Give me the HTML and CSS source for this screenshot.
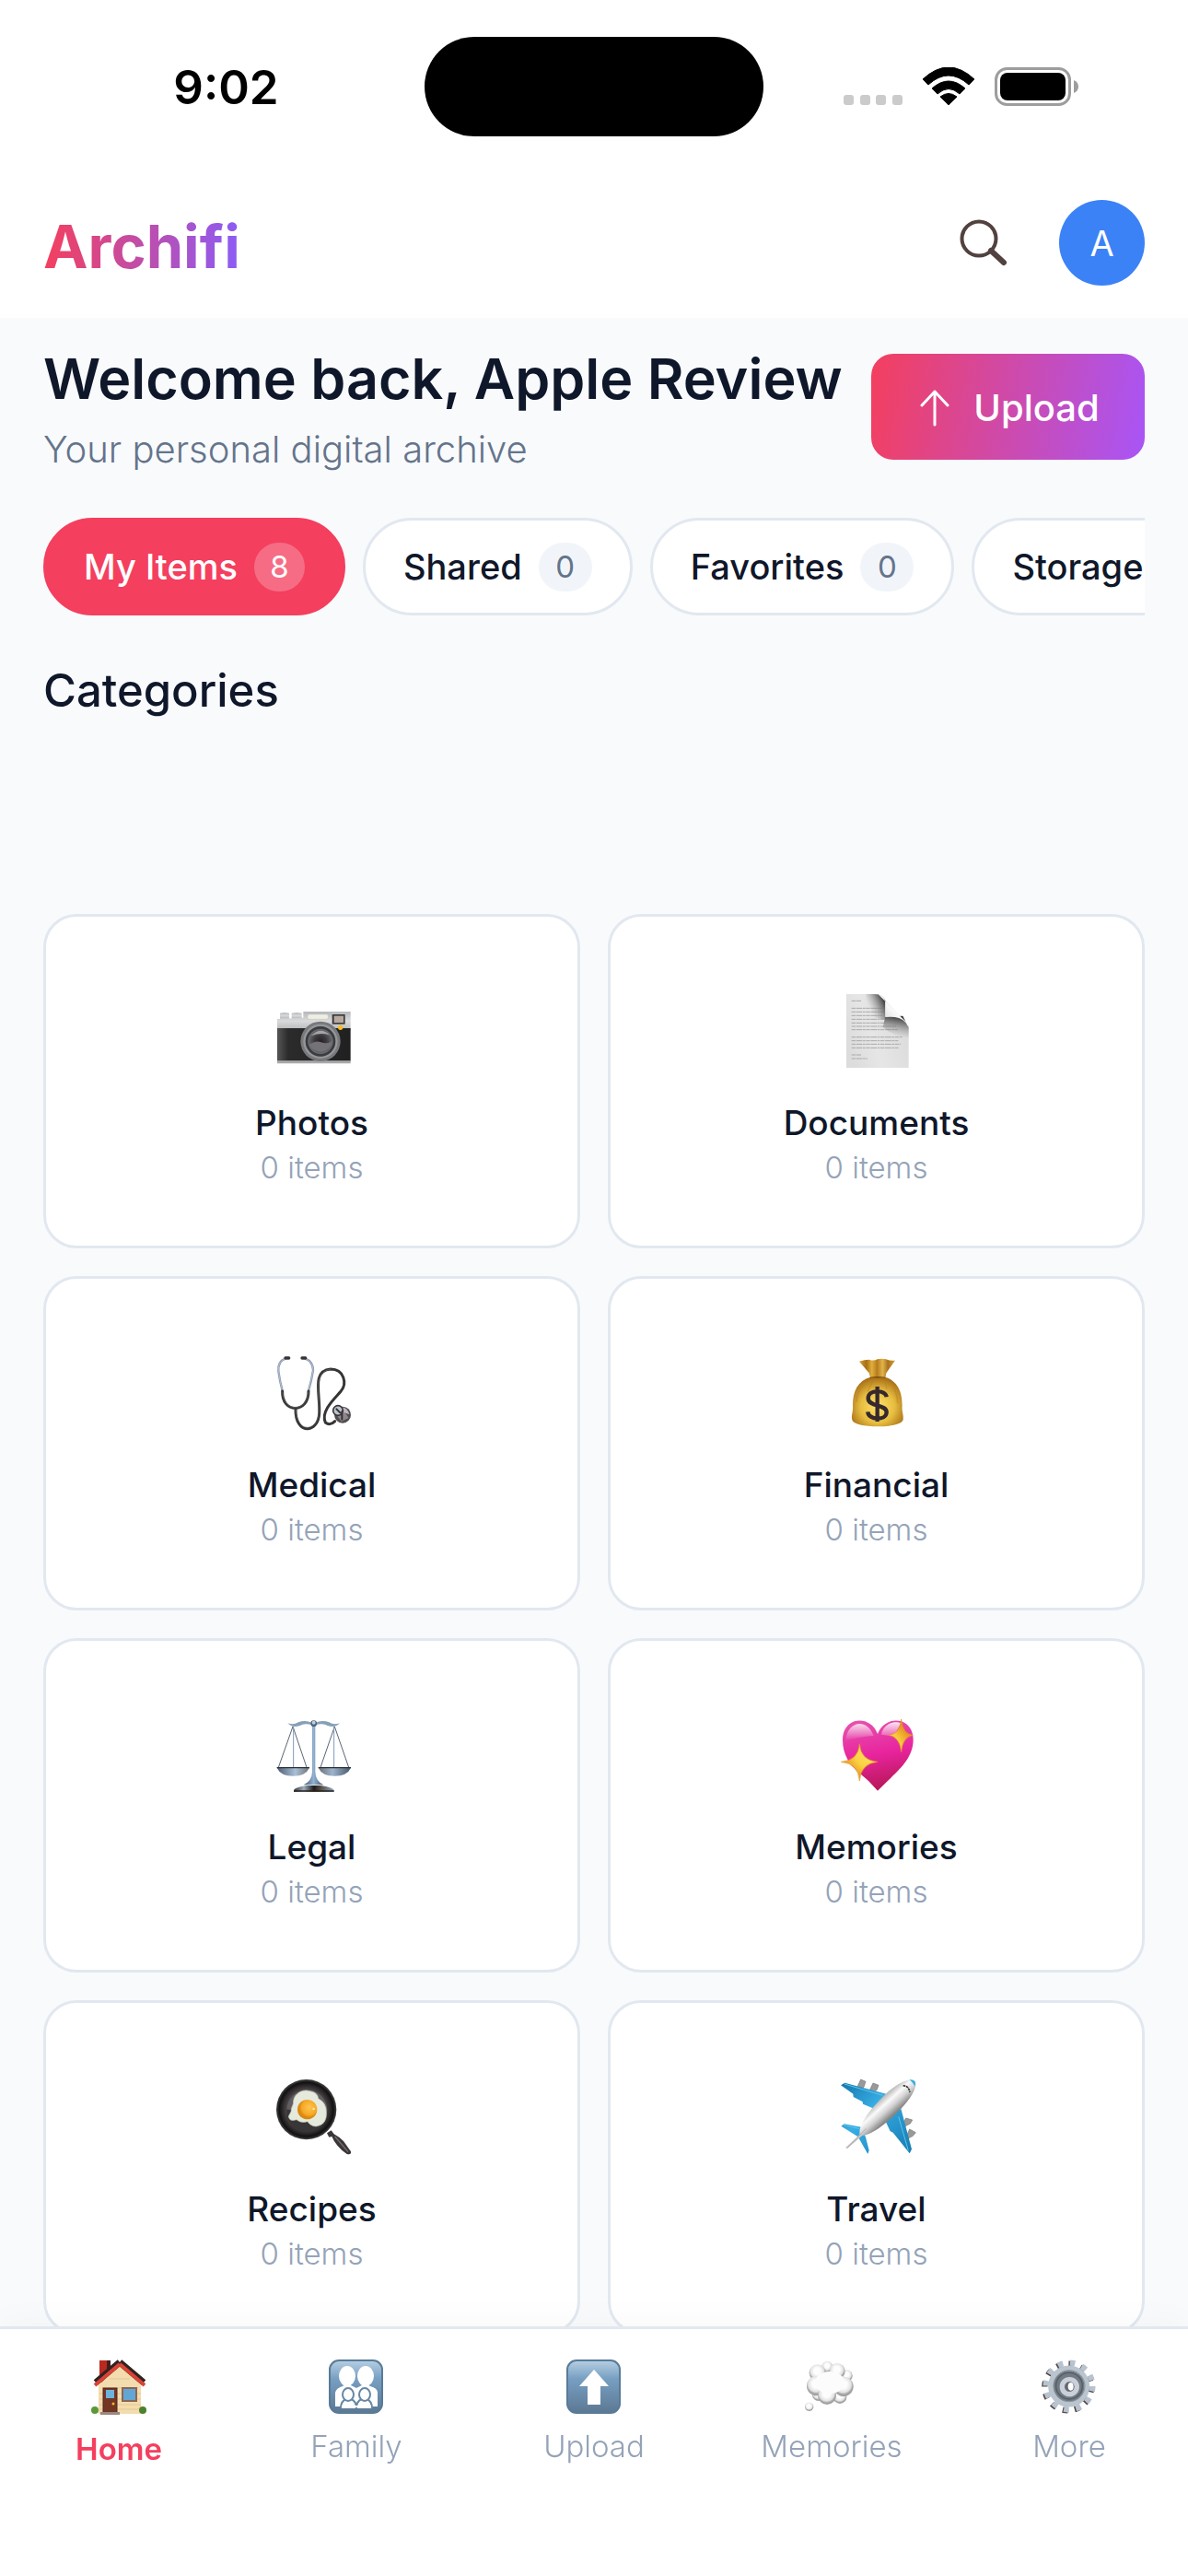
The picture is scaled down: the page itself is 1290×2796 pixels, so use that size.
FILE: index.html
```html
<!DOCTYPE html>
<html lang="en">
<head>
<meta charset="utf-8">
<meta name="viewport" content="width=device-width, initial-scale=1">
<title>Archifi</title>
<link rel="stylesheet" href="styles.css">
</head>
<body>
<div class="app">
  <header class="header">
    <div class="status">
      <span class="status-time">9:02</span>
      <span class="island"></span>
      <span class="status-icons">
        <svg width="64" height="42" viewBox="0 0 64 42" fill="#cbcbcb"><rect y="30" width="11" height="11" rx="3"/><rect x="18" y="30" width="11" height="11" rx="3"/><rect x="35" y="30" width="11" height="11" rx="3"/><rect x="53" y="30" width="11" height="11" rx="3"/></svg>
        <svg width="58" height="42" viewBox="0 0 58 42"><path d="M1 13Q29-13 57 13L51 19Q29-1 7 19ZM11 23Q29 7 47 23L41 29Q29 18 17 29ZM20 32Q29 25 38 32L29 41Z" stroke="#000" stroke-linejoin="round"/></svg>
        <svg width="92" height="42" viewBox="0 0 92 42"><rect x="1.500" y="1.500" width="80" height="39" rx="12" fill="none" stroke="#9d9d9d" stroke-width="3"/><rect x="6" y="6" width="71" height="30" rx="8"/><path d="M86 14q5 2 5 7t-5 7z" fill="#9d9d9d"/></svg>
      </span>
    </div>
    <div class="topbar">
      <span class="logo">Archifi</span>
      <div class="actions">
        <button class="search" aria-label="Search"><svg width="56" height="56" viewBox="0 0 56 56" fill="none" stroke="#51413f" stroke-linecap="round"><circle cx="23" cy="23" r="18.500" stroke-width="4"/><path d="M36 36L50 49" stroke-width="6"/></svg></button>
        <button class="avatar">A</button>
      </div>
    </div>
  </header>

  <main class="main">
    <section class="hero">
      <div>
        <h1 class="welcome">Welcome back, Apple Review</h1>
        <p class="tagline">Your personal digital archive</p>
      </div>
      <button class="upload"><svg width="32" height="40" viewBox="0 0 32 40" fill="none" stroke="#fff" stroke-width="3" stroke-linecap="round" stroke-linejoin="round"><path d="M16 38V2M2 17L16 2L30 17"/></svg>Upload</button>
    </section>

    <div class="tabs">
      <button class="tab active">My Items <span class="count">8</span></button>
      <button class="tab">Shared <span class="count">0</span></button>
      <button class="tab">Favorites <span class="count">0</span></button>
      <button class="tab">Storage <span class="count"></span></button>
    </div>

    <h2 class="section-title">Categories</h2>

    <div class="grid">
      <a class="card" href="#photos">
        <svg class="emoji" viewBox="73 45 264 264">
          <defs>
            <linearGradient id="silver" x2="0" y2="1"><stop stop-color="#b4b7ba"/><stop offset=".5" stop-color="#d8dadb"/><stop offset="1" stop-color="#b5b7b9"/></linearGradient>
            <linearGradient id="leather" x2="1" y2="0"><stop stop-color="#565656"/><stop offset=".15" stop-color="#2b2b2c"/><stop offset="1" stop-color="#202021"/></linearGradient>
            <radialGradient id="lens"><stop stop-color="#262124"/><stop offset=".5" stop-color="#3d3b3e"/><stop offset="1" stop-color="#6e7073"/></radialGradient>
          </defs>
          <path d="M100 119q15-4 30 0v18h-30zM138 119q16-4 33 0v18h-33z" fill="url(#silver)"/>
          <path d="M91 138L176 134V114H330V175H91z" fill="url(#silver)"/>
          <path d="M91 168H330V275H91z" fill="url(#leather)"/>
          <path d="M91 274H330V283H91z" fill="#aaa9aa"/>
          <rect x="190" y="123" width="67" height="16" rx="6" fill="#efeee2" stroke="#bcbcb0"/>
          <rect x="270" y="123" width="42" height="32" fill="#3b3a3c"/><rect x="276" y="128" width="31" height="22" fill="#b8a9a0"/>
          <circle cx="232" cy="211" r="65" fill="#77797b"/><circle cx="232" cy="211" r="56" fill="#95979a"/><circle cx="232" cy="211" r="49" fill="#3a3b3d"/><circle cx="232" cy="211" r="41" fill="url(#lens)"/>
          <path d="M201 193q31-32 61-3-30-10-61 3z" fill="#a6a6aa"/><path d="M195 222q20-16 39-8t38-5q-8 34-40 36-28-3-37-23z" fill="#747276"/>
          <circle cx="297" cy="166" r="8" fill="#f8bd25"/>
        </svg>
        <span class="name">Photos</span><span class="items">0 items</span>
      </a>
      <a class="card" href="#documents">
        <svg class="emoji" viewBox="53 45 264 264">
          <defs>
            <linearGradient id="paper" x1="0" x2="1" y1=".7" y2=".3"><stop stop-color="#dcdcdc"/><stop offset=".4" stop-color="#e6e6e6"/><stop offset="1" stop-color="#dadada"/></linearGradient>
            <linearGradient id="fold-side" gradientUnits="userSpaceOnUse" x1="213" y1="90" x2="165" y2="112"><stop stop-color="#444"/><stop offset="1" stop-color="#999" stop-opacity="0"/></linearGradient>
            <linearGradient id="fold-under" gradientUnits="userSpaceOnUse" x1="250" y1="128" x2="238" y2="195"><stop stop-color="#333"/><stop offset="1" stop-color="#999" stop-opacity="0"/></linearGradient>
            <linearGradient id="curl" x1="0" x2="1" y1="1" y2="0"><stop stop-color="#c8c8c8"/><stop offset=".5" stop-color="#fafafa"/><stop offset="1" stop-color="#ccc"/></linearGradient>
          </defs>
          <path d="M86 57H180Q205 58 213 78L289 160V297H86z" fill="url(#paper)"/>
          <path d="M103 79h31M103 103h100M103 115h104M103 127h100M103 139h105M103 151h110M103 162h145M103 173h150M103 197h165M103 209h152M103 220h160M103 232h153M103 255h31M103 267h52" stroke="#a9a9a9" stroke-width="3" stroke-dasharray="13 2 20 2 8 2"/>
          <path d="M150 57H180Q205 58 213 78V140L150 130z" fill="url(#fold-side)"/>
          <path d="M213 130L270 128 289 165V200Q240 195 205 165z" fill="url(#fold-under)"/>
          <path d="M190 58Q212 64 213 85V132Q274 126 289 165 288 151 274 142z" fill="url(#curl)"/>
        </svg>
        <span class="name">Documents</span><span class="items">0 items</span>
      </a>
      <a class="card" href="#medical">
        <svg class="emoji" viewBox="73 54 264 264" fill="none" stroke-linecap="round">
          <path d="M118 73Q92 84 95 115 99 145 108 179M182 73Q208 84 208 112 203 145 193 179" stroke="#8997ae" stroke-width="7"/>
          <path d="M118 73Q92 84 95 115 99 145 108 179M182 73Q208 84 208 112 203 145 193 179" stroke="#c5d1e2" stroke-width="2"/>
          <path d="M118 72h11M172 72h11" stroke="#373434" stroke-width="10"/>
          <path d="M108 180C105 254 194 254 193 180M151 238C149 324 224 319 228 253 232 190 202 113 265 108 309 108 320 156 298 181 276 206 232 246 248 282Q263 294 279 278" stroke="#353536" stroke-width="9"/>
          <path d="M109 183C108 250 191 250 192 183M152 240C152 315 223 315 226 250 230 190 205 119 265 108" stroke="#777" stroke-width="1.500"/>
          <circle cx="304" cy="257" r="27" fill="#504d50"/><path d="M289 234q31-7 37 22-13-9-24-2z" fill="#bcb5c0"/><path d="M287 261l25-12 12 18-24 12z" fill="#8d8589"/><circle cx="289" cy="243" r="16" fill="#b9c5ca" stroke="#363437" stroke-width="5"/><path d="M284 238l12 12M302 246v26" stroke="#353235" stroke-width="6"/>
        </svg>
        <span class="name">Medical</span><span class="items">0 items</span>
      </a>
      <a class="card" href="#financial">
        <svg class="emoji" viewBox="53 54 264 264">
          <defs>
            <radialGradient id="bag" cx=".5" cy=".6" r=".6"><stop stop-color="#ffe169"/><stop offset=".55" stop-color="#e7bd40"/><stop offset="1" stop-color="#a66d15"/></radialGradient>
            <linearGradient id="neck" x2="1" y2="0"><stop stop-color="#d2a12f"/><stop offset=".2" stop-color="#a96e16"/><stop offset=".35" stop-color="#dfb03b"/><stop offset=".5" stop-color="#b87c1d"/><stop offset=".65" stop-color="#e1b44a"/><stop offset=".8" stop-color="#a9721c"/><stop offset="1" stop-color="#d3a53b"/></linearGradient>
          </defs>
          <path d="M165 134C123 146 107 180 107 225 109 247 101 259 105 273 110 302 265 303 271 272 273 256 266 247 268 226 268 182 253 146 212 134z" fill="url(#bag)"/>
          <path d="M147 154q-25 25-28 61M175 143q-12 23-20 39M209 144q8 18 8 30M229 151q23 28 24 69" stroke="#b9821f" stroke-width="4" fill="none" opacity=".5"/>
          <path d="M128 83Q146 77 160 77 176 83 187 76 202 72 215 76 230 82 245 80L216 121 213 138H165L160 121Z" fill="url(#neck)"/>
          <path d="M163 136q25-4 50 0" stroke="#875210" stroke-width="4"/>
          <path d="M217 199C214 174 157 173 157 203 157 232 218 222 217 249 216 277 157 275 156 247M187 165V279" fill="none" stroke="#35292d" stroke-width="13"/>
        </svg>
        <span class="name">Financial</span><span class="items">0 items</span>
      </a>
      <a class="card" href="#legal">
        <svg class="emoji" viewBox="73 63 264 264" fill="none">
          <defs>
            <linearGradient id="pole" x2="1" y2="0"><stop stop-color="#40566b"/><stop offset=".5" stop-color="#91b2d3"/><stop offset="1" stop-color="#40556b"/></linearGradient>
            <linearGradient id="steel" x2="1" y2="0"><stop stop-color="#34383d"/><stop offset=".25" stop-color="#9dacbc"/><stop offset=".5" stop-color="#1d1b1a"/><stop offset=".65" stop-color="#55483f"/><stop offset="1" stop-color="#8da9c7"/></linearGradient>
            <linearGradient id="dish" x2="1" y2="0"><stop stop-color="#4c5d70"/><stop offset=".25" stop-color="#a9c0d6"/><stop offset=".5" stop-color="#5c5a5b"/><stop offset=".75" stop-color="#9db4cb"/><stop offset="1" stop-color="#45566a"/></linearGradient>
          </defs>
          <path d="M142 102L94 238M142 102L188 238M278 102L231 238M278 102L325 238" stroke="#596675" stroke-width="3"/>
          <path d="M144 102V236M276 102V236" stroke="#7f9bb7" stroke-width="3"/>
          <path d="M125 91Q145 98 160 88 182 80 204 89V97Q180 89 165 99 140 108 125 91ZM295 91Q275 98 260 88 238 80 216 89V97Q240 89 255 99 280 108 295 91Z" fill="#86a0b7"/>
          <path d="M205 99H215V250Q216 280 242 292H177Q204 279 205 250z" fill="url(#pole)"/>
          <circle cx="210" cy="92" r="10" fill="#4d6479"/><circle cx="210" cy="89" r="6" fill="#bed0dc"/>
          <path d="M90 236H196Q184 263 143 263T90 236ZM225 236H331Q319 263 278 263T225 236Z" fill="url(#dish)"/>
          <path d="M90 236H196M225 236H331" stroke="#2a3038" stroke-width="4"/>
          <path d="M145 309Q149 300 187 294H233Q271 300 276 309V314H145Z" fill="url(#steel)"/><path d="M145 312H276" stroke="#28241f" stroke-width="5"/>
        </svg>
        <span class="name">Legal</span><span class="items">0 items</span>
      </a>
      <a class="card" href="#memories">
        <svg class="emoji" viewBox="53 63 264 264">
          <defs>
            <linearGradient id="heart" x2=".2" y2="1"><stop stop-color="#e656af"/><stop offset=".55" stop-color="#e8249e"/><stop offset="1" stop-color="#bc185e"/></linearGradient>
            <linearGradient id="gloss" x2="0" y2="1"><stop stop-color="#fff" stop-opacity=".85"/><stop offset="1" stop-color="#fff" stop-opacity="0"/></linearGradient>
            <radialGradient id="spark"><stop stop-color="#ffe574"/><stop offset=".65" stop-color="#fbd143"/><stop offset="1" stop-color="#e79720"/></radialGradient>
          </defs>
          <path d="M188 311Q160 278 128 253C97 226 74 195 74 145 74 69 164 62 188 126 213 62 304 69 304 145 304 198 266 237 231 269Q203 296 188 311Z" fill="url(#heart)"/>
          <path d="M84 148C88 84 153 72 175 132Q125 136 84 148ZM200 128C207 90 245 82 264 91L241 134z" fill="url(#gloss)"/>
          <path d="M129 158Q133 212 188 217 133 223 129 279 125 223 69 217 125 212 129 158ZM265 78Q269 126 303 130 269 137 265 185 260 137 225 130 260 126 265 78Z" fill="url(#spark)" stroke="#e39522" stroke-width="2"/>
        </svg>
        <span class="name">Memories</span><span class="items">0 items</span>
      </a>
      <a class="card" href="#recipes">
        <svg class="emoji" viewBox="73 42 264 264">
          <defs>
            <radialGradient id="pan"><stop offset=".55" stop-color="#5e5a5c"/><stop offset=".78" stop-color="#302c2e"/><stop offset=".9" stop-color="#111"/><stop offset="1" stop-color="#444"/></radialGradient>
            <radialGradient id="yolk" cx=".6" cy=".4"><stop stop-color="#ffc44f"/><stop offset=".75" stop-color="#f5a925"/><stop offset="1" stop-color="#dc8912"/></radialGradient>
          </defs>
          <path d="M253 226L267 217 276 229Q291 237 307 252L331 286Q333 298 318 294 302 284 287 266 275 252 269 237L260 239z" fill="#3b3739"/><path d="M279 237L322 287" stroke="#77706d" stroke-width="4"/>
          <circle cx="186" cy="149" r="98" fill="url(#pan)"/><circle cx="188" cy="151" r="66" fill="#625d60"/><path d="M122 148A66 66 0 0 0 250 177z" fill="#393638"/>
          <path d="M156 98Q174 82 198 89 222 92 225 113 252 128 251 157 254 199 218 204 199 203 190 188 170 195 154 182 130 190 128 171L136 156Q137 142 143 131 143 108 156 98Z" fill="#e5eadc" stroke="#bec8b5" stroke-width="2"/>
          <circle cx="189" cy="149" r="32" fill="url(#yolk)"/><circle cx="210" cy="147" r="4" fill="#ffe59b"/>
        </svg>
        <span class="name">Recipes</span><span class="items">0 items</span>
      </a>
      <a class="card" href="#travel">
        <svg class="emoji" viewBox="53 42 264 264">
          <defs>
            <linearGradient id="fuselage" gradientUnits="userSpaceOnUse" x1="195" y1="115" x2="240" y2="165"><stop stop-color="#b5b5b5"/><stop offset=".35" stop-color="#fafafa"/><stop offset=".65" stop-color="#d2d2d2"/><stop offset="1" stop-color="#858585"/></linearGradient>
            <linearGradient id="wing" x2="1" y2="1"><stop stop-color="#1376ac"/><stop offset=".4" stop-color="#38aee4"/><stop offset="1" stop-color="#147ab1"/></linearGradient>
          </defs>
          <path d="M123 73L133 51 149 58 143 76 131 80ZM163 84L173 63 191 70 185 86 174 91ZM271 194L280 177 301 183 294 195 278 203ZM282 236L292 213 312 224 303 235 288 243Z" fill="#999" stroke="#777" stroke-width="2"/>
          <path d="M68 70L81 62 216 98 185 150 140 131 139 124 109 108 108 98ZM264 146L299 278 292 292 238 224 229 220 212 184ZM69 203L79 196 135 206 149 239 160 282 156 294 124 238Z" fill="url(#wing)"/>
          <path d="M80 66L205 103M256 172L288 283M77 199L130 212" stroke="#5fc4ee" stroke-width="3"/>
          <path d="M133 203Q148 166 191 122 247 60 296 51 316 55 310 78 298 117 236 174 175 230 138 234L89 276Q82 278 85 271L129 231Q128 216 133 203Z" fill="url(#fuselage)"/>
          <path d="M292 52Q316 50 311 74 304 64 292 52Z" fill="#39aee3"/><path d="M271 72q17-2 22 21" fill="none" stroke="#333" stroke-width="5" stroke-dasharray="8 2"/><path d="M89 274L150 211" stroke="#999" stroke-width="2"/>
        </svg>
        <span class="name">Travel</span><span class="items">0 items</span>
      </a>
    </div>
  </main>

  <nav class="nav">
    <a class="nav-item current" href="#home">
      <svg class="nav-icon" viewBox="0 0 60 60">
        <rect x="9" y="1" width="11" height="24" fill="#b8291f"/><path d="M17 1h4v18h-4z" fill="#471c1a"/>
        <path d="M31 5L54 28V59H8V28z" fill="#f3dcae"/><path d="M9 37h45M9 43h45M9 49h45M9 54h45M13 31h38M20 21h22" stroke="#e4c796"/>
        <path d="M31 3L5 25M31 3L57 25" stroke="#302321" stroke-width="7"/><path d="M31 5L4 28M31 5L58 28" stroke="#d94335" stroke-width="4"/>
        <rect x="13" y="31" width="15" height="27" fill="#733624" stroke="#52251b"/><rect x="16" y="33" width="9" height="9" fill="#6db4dc"/><circle cx="24" cy="48" r="1.500" fill="#f4b92f"/>
        <rect x="34" y="31" width="15" height="14" fill="#62a6d5" stroke="#8c6652" stroke-width="2"/>
        <path d="M10 57h21v3H10z" fill="#9b8880"/><circle cx="4" cy="55" r="4" fill="#5c983a"/><circle cx="56" cy="55" r="4" fill="#4d812d"/>
      </svg>Home</a>
    <a class="nav-item" href="#family">
      <svg class="nav-icon" viewBox="0 0 60 60">
        <defs><linearGradient id="tile" x2="0" y2="1"><stop stop-color="#b7cfe2"/><stop offset=".35" stop-color="#779fc2"/><stop offset="1" stop-color="#5c7893"/></linearGradient></defs>
        <rect x="1" y="1" width="57" height="57" rx="10" fill="url(#tile)" stroke="#587b98" stroke-width="2"/>
        <g fill="#fff"><ellipse cx="20" cy="18" rx="9" ry="11"/><ellipse cx="40" cy="18" rx="9" ry="11"/><path d="M7 51V36q1-5 8-7l5-3 6 3 4 2 4-2 6-3 5 3q8 2 8 7v15z"/></g>
        <g fill="#fff" stroke="#6888a5" stroke-width="2"><path d="M13 53q0-8 6-10h5q6 2 6 10M30 53q0-8 6-10h5q6 2 6 10"/><ellipse cx="21" cy="38" rx="6" ry="7"/><ellipse cx="39" cy="38" rx="6" ry="7"/></g><path d="M14 50h32v2H14z" fill="#fff"/>
      </svg>Family</a>
    <a class="nav-item" href="#upload">
      <svg class="nav-icon" viewBox="0 0 60 60"><rect x="1" y="1" width="57" height="57" rx="10" fill="url(#tile)" stroke="#587b98" stroke-width="2"/><path d="M30 11L46 29H37V49H23V29H14Z" fill="#fff"/></svg>Upload</a>
    <a class="nav-item" href="#moments">
      <svg class="nav-icon" viewBox="39 33 180 180">
        <defs><radialGradient id="puff" cx=".48" cy=".4"><stop offset=".4" stop-color="#fdfdfd"/><stop offset=".8" stop-color="#e2e2e2"/><stop offset="1" stop-color="#a2a2a2"/></radialGradient></defs>
        <g fill="url(#puff)"><circle cx="86" cy="148" r="20"/><circle cx="115" cy="57" r="18"/><circle cx="178" cy="86" r="19"/><circle cx="83" cy="76" r="27"/><circle cx="147" cy="71" r="26"/><circle cx="156" cy="155" r="22"/><circle cx="80" cy="119" r="32"/><circle cx="168" cy="121" r="32"/><circle cx="114" cy="150" r="30"/><circle cx="56" cy="187" r="14"/></g><ellipse cx="123" cy="108" rx="48" ry="36" fill="#fcfcfc"/>
      </svg>Memories</a>
    <a class="nav-item" href="#more">
      <svg class="nav-icon" viewBox="810 33 180 180" fill="none">
        <circle cx="896" cy="123" r="76" stroke="#4f4641" stroke-width="19" stroke-dasharray="17 22.800"/>
        <circle cx="900" cy="120" r="76" stroke="#b8c3cf" stroke-width="19" stroke-dasharray="17 22.800"/>
        <circle cx="899" cy="120" r="59" fill="#717a83" stroke="#b9c4ce" stroke-width="17"/><circle cx="900" cy="119" r="43" stroke="#555d66" stroke-width="4"/><circle cx="900" cy="119" r="51" stroke="#8c959e" stroke-width="3"/>
        <circle cx="901" cy="122" r="24" stroke="#c9d0da" stroke-width="16"/><circle cx="901" cy="121" r="15" fill="#65676f"/><ellipse cx="905" cy="121" rx="9" ry="13" fill="#fff"/>
      </svg>More</a>
  </nav>
</div>
</body>
</html>
```
FILE: styles.css
```css
* { box-sizing: border-box; }

body {
  margin: 0;
  font-family: Inter, "Liberation Sans", sans-serif;
  color: #0f172a;
  background: #fff;
}

button {
  font: inherit;
  color: inherit;
  border: 0;
  padding: 0;
  background: none;
}

a { color: inherit; text-decoration: none; }

.app {
  height: 100vh;
  display: flex;
  flex-direction: column;
}

.header { flex: none; background: #fff; }

.status {
  height: 188px;
  padding: 0 92px;
  display: grid;
  grid-template-columns: 1fr 368px 1fr;
  align-items: center;
}

.status-time {
  padding-right: 62px;
  text-align: center;
  font-size: 51px;
  font-weight: 600;
  color: #000;
}

.island { height: 108px; border-radius: 54px; background: #000; }

.status-icons {
  display: flex;
  justify-content: flex-end;
  gap: 21px;
  padding-right: 26px;
}

.topbar {
  display: flex;
  align-items: flex-end;
  justify-content: space-between;
  padding: 29px 47px 35px;
}

.logo {
  font-size: 65px;
  line-height: 84px;
  font-weight: 700;
  color: transparent;
  background: linear-gradient(90deg, #f43f5e, #8b5cf6);
  background-clip: text;
  -webkit-background-clip: text;
}

.actions { display: flex; align-items: center; gap: 54px; }

.search svg { display: block; }

.avatar {
  width: 93px;
  height: 93px;
  border-radius: 50%;
  background: #3b82f6;
  color: #fff;
  font-size: 38px;
}

.main {
  flex: 1;
  min-height: 0;
  overflow-y: auto;
  scrollbar-width: none;
  background: #f9fafc;
  padding: 39px 47px;
}

.hero {
  display: flex;
  justify-content: space-between;
  align-items: flex-start;
}

.welcome {
  margin: 0;
  font-size: 61px;
  line-height: 54px;
  font-weight: 600;
  white-space: nowrap;
}

.tagline {
  margin: 24px 0 0;
  font-size: 40px;
  line-height: 52px;
  font-weight: 300;
  color: #64748b;
}

.upload {
  display: flex;
  align-items: center;
  justify-content: center;
  gap: 26px;
  width: 297px;
  height: 115px;
  padding: 2px 0 0 4px;
  border-radius: 24px;
  background: linear-gradient(100deg, #f43f5e, #a855f7);
  color: #fff;
  font-size: 40px;
  font-weight: 500;
}

.tabs {
  display: flex;
  gap: 19px;
  margin-top: 48px;
  overflow-x: auto;
  scrollbar-width: none;
}

.tab {
  flex: none;
  display: flex;
  align-items: center;
  gap: 18px;
  height: 106px;
  padding: 0 41px;
  border: 3px solid #e2e8f0;
  border-radius: 53px;
  background: #fff;
  font-size: 38px;
  font-weight: 500;
}

.count {
  min-width: 58px;
  height: 53px;
  border-radius: 27px;
  background: #f1f5f9;
  color: #64748b;
  font-size: 33px;
  line-height: 53px;
  font-weight: 400;
  text-align: center;
}

.active { background: #f43f5e; border-color: #f43f5e; color: #fff; }
.active .count { min-width: 55px; background: rgba(255, 255, 255, .24); color: #fff; }

.section-title {
  margin: 52px 0 0;
  font-size: 49px;
  line-height: 60px;
  font-weight: 500;
}

.grid {
  display: grid;
  grid-template-columns: 1fr 1fr;
  gap: 30px;
  margin-top: 212px;
}

.card {
  display: flex;
  flex-direction: column;
  align-items: center;
  height: 363px;
  padding-top: 80px;
  border: 3px solid #e2e8f0;
  border-radius: 36px;
  background: #fff;
}

.emoji { width: 88px; height: 88px; }

.name {
  margin-top: 32px;
  font-size: 37px;
  line-height: 48px;
  font-weight: 500;
}

.items {
  font-size: 33px;
  line-height: 48px;
  font-weight: 300;
  color: #94a3b8;
}

.nav {
  flex: none;
  display: grid;
  grid-template-columns: repeat(5, 1fr);
  height: 271px;
  padding-top: 33px;
  border-top: 3px solid #e2e8f0;
  background: #fff;
  box-shadow: 0 -4px 36px rgba(15, 23, 42, .03);
  z-index: 1;
}

.nav-item {
  display: flex;
  flex-direction: column;
  align-items: center;
  gap: 12px;
  font-size: 33px;
  line-height: 44px;
  font-weight: 300;
  color: #94a3b8;
}

.nav-icon { width: 60px; height: 60px; }
.current { color: #f43f5e; font-weight: 600; gap: 15px; }
```
